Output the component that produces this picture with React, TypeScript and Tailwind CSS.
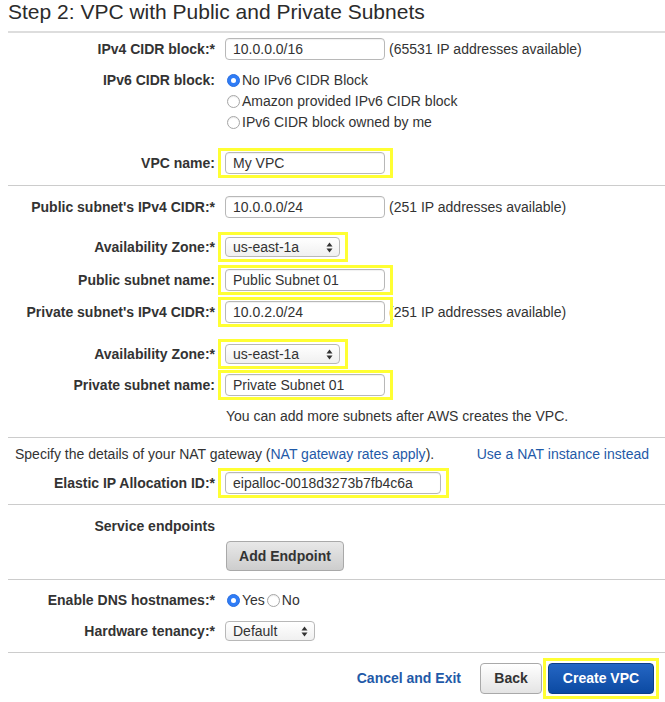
import clsx from "clsx";
import { ReactNode } from "react";

const Highlight: React.FC<{ children: ReactNode; on?: boolean }> = ({
  children,
  on,
}) => (
  <div className="relative flex h-[30px] items-center">
    {children}
    {on && (
      <span className="pointer-events-none absolute -left-[7px] -right-[8px] top-0 bottom-0 z-10 border-[3px] border-[#ffff33]" />
    )}
  </div>
);

const Input: React.FC<{ value: string; w?: string }> = ({
  value,
  w = "w-[160px]",
}) => (
  <div
    className={clsx(
      "flex h-[22px] items-center rounded-[4px] border border-[#b8b8b8] bg-white pl-[7px] shadow-[inset_0_1px_1px_rgba(0,0,0,0.06)]",
      w,
    )}
  >
    {value}
  </div>
);

const Select: React.FC<{ value: string; w: string }> = ({ value, w }) => (
  <div
    className={clsx(
      "flex h-[20px] items-center justify-between rounded-[4px] border border-[#b8b8b8] bg-linear-to-b from-white to-[#f0f0f0] pl-[7px] pr-[6px]",
      w,
    )}
  >
    <span>{value}</span>
    <svg width="7" height="11" viewBox="0 0 7 11">
      <path d="M3.5 0.5 L6.5 4.5 H0.5Z M3.5 10.5 L0.5 6.5 H6.5Z" fill="#333" />
    </svg>
  </div>
);

const Radio: React.FC<{ checked?: boolean }> = ({ checked }) =>
  checked ? (
    <span className="flex size-[13px] shrink-0 items-center justify-center rounded-full border border-[#2a6fe0] bg-[#2f7cf6]">
      <span className="size-[5px] rounded-full bg-white" />
    </span>
  ) : (
    <span className="block size-[13px] shrink-0 rounded-full border border-[#a6a6a6] bg-white shadow-[inset_0_1px_1px_rgba(0,0,0,0.08)]" />
  );

const Row: React.FC<{ label: string; children: ReactNode; className?: string }> = ({
  label,
  children,
  className,
}) => (
  <div className={clsx("flex h-[30px] items-center", className)}>
    <div className="w-[215px] shrink-0 text-right font-bold">{label}</div>
    <div className="flex items-center pl-[10px]">{children}</div>
  </div>
);

const Line: React.FC<{ className?: string }> = ({ className }) => (
  <div className={clsx("ml-[8px] border-t border-[#cccccc]", className)} />
);

const Note: React.FC<{ children: ReactNode }> = ({ children }) => (
  <span className="ml-[4px] whitespace-nowrap">{children}</span>
);

export default function App() {
  return (
    <div className="h-[702px] w-[665px] overflow-hidden bg-white font-['Liberation_Sans',Arial,sans-serif] text-[14px] text-[#333]">
      <div className="h-[31px] pl-[8px] text-[21px] leading-[24px] text-[#2b2b2b]">
        Step 2: VPC with Public and Private Subnets
      </div>
      <div className="ml-[8px] border-t-2 border-[#dddddd]" />

      <Row label="IPv4 CIDR block:*" className="mt-[1px]">
        <Highlight>
          <Input value="10.0.0.0/16" />
        </Highlight>
        <Note>(65531 IP addresses available)</Note>
      </Row>

      <div className="mt-[6px] flex">
        <div className="h-[21px] w-[215px] shrink-0 text-right font-bold leading-[21px]">
          IPv6 CIDR block:
        </div>
        <div className="flex flex-col pl-[12px]">
          <div className="flex h-[21px] items-center gap-[2px]">
            <Radio checked />
            No IPv6 CIDR Block
          </div>
          <div className="flex h-[21px] items-center gap-[2px]">
            <Radio />
            Amazon provided IPv6 CIDR block
          </div>
          <div className="flex h-[21px] items-center gap-[2px]">
            <Radio />
            IPv6 CIDR block owned by me
          </div>
        </div>
      </div>

      <Row label="VPC name:" className="mt-[15px]">
        <Highlight on>
          <Input value="My VPC" />
        </Highlight>
      </Row>

      <Line className="mt-[7px]" />

      <Row label="Public subnet's IPv4 CIDR:*" className="mt-[6px]">
        <Highlight>
          <Input value="10.0.0.0/24" />
        </Highlight>
        <Note>(251 IP addresses available)</Note>
      </Row>
      <Row label="Availability Zone:*" className="mt-[10px]">
        <Highlight on>
          <Select value="us-east-1a" w="w-[115px]" />
        </Highlight>
      </Row>
      <Row label="Public subnet name:" className="mt-[3px]">
        <Highlight on>
          <Input value="Public Subnet 01" />
        </Highlight>
      </Row>
      <Row label="Private subnet's IPv4 CIDR:*" className="mt-[2px]">
        <Highlight on>
          <Input value="10.0.2.0/24" />
        </Highlight>
        <Note>(251 IP addresses available)</Note>
      </Row>
      <Row label="Availability Zone:*" className="mt-[12px]">
        <Highlight on>
          <Select value="us-east-1a" w="w-[115px]" />
        </Highlight>
      </Row>
      <Row label="Private subnet name:" className="mt-[1px]">
        <Highlight on>
          <Input value="Private Subnet 01" />
        </Highlight>
      </Row>
      <div className="mt-[6px] flex h-[20px] items-center pl-[226px]">
        You can add more subnets after AWS creates the VPC.
      </div>

      <Line className="mt-[11px]" />

      <div className="mt-[6px] flex h-[20px] items-center justify-between pl-[15px] pr-[16px]">
        <span>
          Specify the details of your NAT gateway (
          <span className="text-[#1f5aa8]">NAT gateway rates apply</span>).
        </span>
        <span className="text-[#1f5aa8]">Use a NAT instance instead</span>
      </div>
      <Row label="Elastic IP Allocation ID:*" className="mt-[4px]">
        <Highlight on>
          <Input value="eipalloc-0018d3273b7fb4c6a" w="w-[216px]" />
        </Highlight>
      </Row>

      <Line className="mt-[6px]" />

      <div className="mt-[11px] flex h-[20px] items-center">
        <div className="w-[215px] text-right font-bold">Service endpoints</div>
      </div>
      <button className="mt-[5px] ml-[226px] flex h-[30px] w-[118px] items-center justify-center rounded-[4px] border border-[#a9a9a9] bg-linear-to-b from-[#e8e8e8] to-[#cdcdcd] font-bold text-[#333]">
        Add Endpoint
      </button>

      <Line className="mt-[8px]" />

      <div className="mt-[10px] flex h-[20px] items-center">
        <div className="w-[215px] shrink-0 text-right font-bold">
          Enable DNS hostnames:*
        </div>
        <div className="flex items-center gap-[2px] pl-[12px]">
          <Radio checked />
          <span>Yes</span>
          <Radio />
          <span>No</span>
        </div>
      </div>
      <Row label="Hardware tenancy:*" className="mt-[6px]">
        <Select value="Default" w="w-[90px]" />
      </Row>

      <Line className="mt-[6px]" />

      <div className="mt-[5px] flex items-center justify-end pr-[6px]">
        <span className="mr-[19px] font-bold text-[#1f5aa8]">Cancel and Exit</span>
        <button className="mr-[1px] flex h-[31px] w-[62px] items-center justify-center rounded-[4px] border border-[#a9a9a9] bg-linear-to-b from-white to-[#e4e4e4] font-bold text-[#333]">
          Back
        </button>
        <div className="border-[3px] border-[#ffff33] p-[2px]">
          <button className="flex h-[31px] w-[106px] items-center justify-center rounded-[4px] border border-[#0c3f87] bg-linear-to-b from-[#2466c4] to-[#0b4aa2] font-bold text-white">
            Create VPC
          </button>
        </div>
      </div>
    </div>
  );
}
